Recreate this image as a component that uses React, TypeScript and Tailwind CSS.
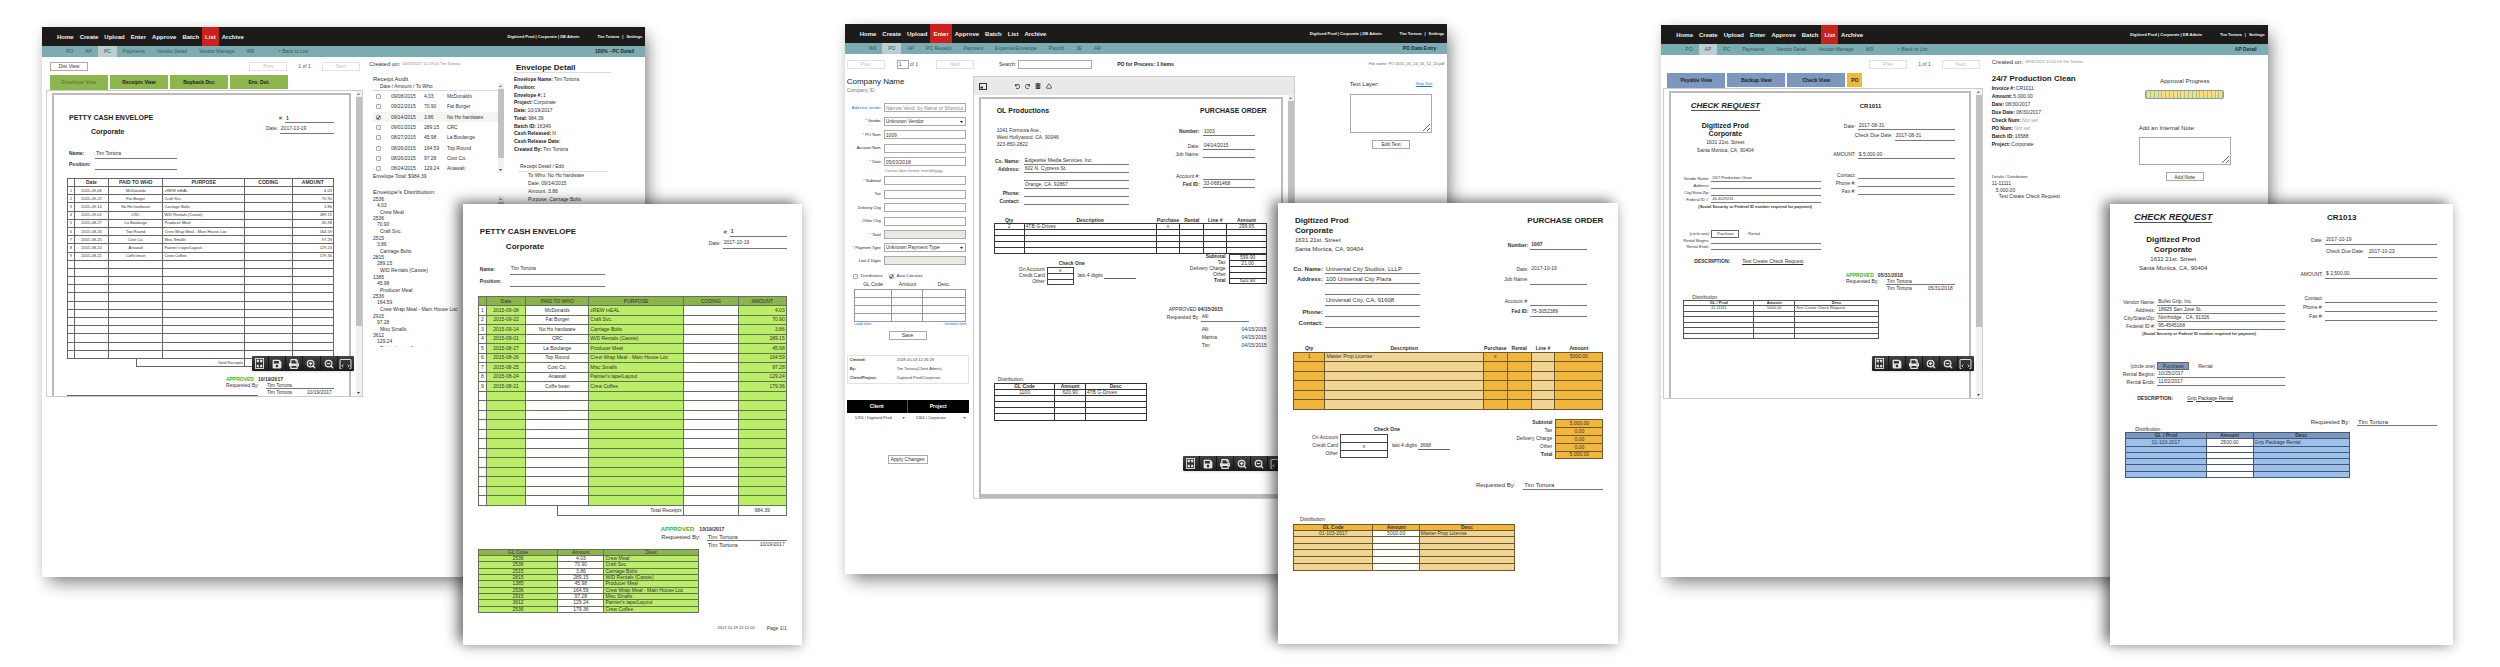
import { ReactNode } from "react";
import { FaSave, FaPrint, FaTrashAlt, FaUndo, FaRedo } from "react-icons/fa";
import { ZoomIn, ZoomOut, Triangle } from "lucide-react";

/* ---------- data ---------- */

const receipts = [
  { date: "2015-09-08", short: "09/08/2015", who: "McDonalds", purpose: "cREW mEAL", gl: "2536", desc: "Crew Meal", amount: "4.03" },
  { date: "2015-09-22", short: "09/22/2015", who: "Fat Burger", purpose: "Craft Svc.", gl: "2536", desc: "Craft Svc.", amount: "70.90" },
  { date: "2015-09-14", short: "09/14/2015", who: "No Ho hardware", purpose: "Carriage Bolts", gl: "2515", desc: "Carriage Bolts", amount: "3.86" },
  { date: "2015-09-01", short: "09/01/2015", who: "CRC", purpose: "W/D Rentals (Cassie)", gl: "2815", desc: "W/D Rentals (Cassie)", amount: "289.15" },
  { date: "2015-08-27", short: "08/27/2015", who: "La Boulange", purpose: "Producer Meal", gl: "1385", desc: "Producer Meal", amount: "45.98" },
  { date: "2015-08-26", short: "08/26/2015", who: "Top Round", purpose: "Crew Wrap Meal - Main House Loc", gl: "2536", desc: "Crew Wrap Meal - Main House Loc", amount: "164.59" },
  { date: "2015-08-25", short: "08/26/2015", who: "Cost Co.", purpose: "Misc Smalls", gl: "2915", desc: "Misc Smalls", amount: "97.28" },
  { date: "2015-08-24", short: "08/24/2015", who: "Anawalt", purpose: "Painter's tape/Layout", gl: "3612", desc: "Painter's tape/Layout", amount: "129.24" },
  { date: "2015-08-21", short: "08/21/2015", who: "Coffe bean", purpose: "Crew Coffee", gl: "2536", desc: "Crew Coffee", amount: "179.36" },
];

const mainNav = ["Home", "Create", "Upload", "Enter", "Approve", "Batch", "List", "Archive"];
const listNav = ["PO", "AP", "PC", "Payments", "Vendor Detail", "Vendor Manage", "W9"];
const entryNav = ["W9", "PO", "AP", "PC Receipt", "Payment", "Expense/Envelope", "Payroll", "JE", "AR"];

const range = (n: number) => Array.from({ length: n }, (_, i) => i);

/* ---------- application chrome ---------- */

type WindowProps = {
  active: string;
  sub: string[];
  activeSub: string;
  back?: boolean;
  title: string;
  className: string;
  children: ReactNode;
};

function AppWindow({ active, sub, activeSub, back, title, className, children }: WindowProps) {
  return (
    <section
      className={`flex flex-col bg-white font-[family-name:'Liberation_Sans',Arial,sans-serif] text-[5px] leading-none text-[#333] shadow-[5px_8px_16px_-2px_rgba(0,0,0,0.45),0_0_10px_rgba(0,0,0,0.08)] ${className}`}
    >
      <header>
        <nav className="flex h-[19px] items-stretch bg-[#1c1b19] pl-[12px] pr-[3px] font-bold text-[#f2f2f2]">
          {mainNav.map((item) => (
            <a
              key={item}
              href="#"
              className={`flex items-center px-[3px] text-[6px] ${item === active ? "bg-[#cb2020]" : ""}`}
            >
              {item}
            </a>
          ))}
          <div className="ml-auto flex items-center text-[4px]">
            <span>Digitized Prod | Corporate | DB Admin</span>
            <a href="#" className="ml-[18px]">Tim Tortora</a>
            <span className="mx-[3px]">|</span>
            <a href="#">Settings</a>
          </div>
        </nav>
        <nav className="flex h-[11px] items-stretch bg-[#7aacb1] pl-[18px] pr-[11px] text-[#34585c]">
          {sub.map((item) => (
            <a
              key={item}
              href="#"
              className={`flex items-center whitespace-nowrap px-[6px] ${item === activeSub ? "bg-[#bccfd0]" : ""}`}
            >
              {item}
            </a>
          ))}
          {back && (
            <a href="#" className="ml-[12px] flex items-center px-[6px]">
              &lt; Back to List
            </a>
          )}
          <h2 className="ml-auto flex items-center font-bold text-[#1e2b2c]">{title}</h2>
        </nav>
      </header>
      {children}
    </section>
  );
}

function PlainButton({ children, className = "w-[38px]", faded = false }: { children: ReactNode; className?: string; faded?: boolean }) {
  return (
    <button
      className={`flex h-[9px] shrink-0 items-center justify-center whitespace-nowrap border bg-white ${faded ? "border-[#e2e2e2] text-[#c0c0c0]" : "border-[#aaa] text-[#333]"} ${className}`}
    >
      {children}
    </button>
  );
}

function CheckBox({ checked = false }: { checked?: boolean }) {
  return (
    <span className="relative flex size-[5px] shrink-0">
      <input type="checkbox" defaultChecked={checked} className="peer size-[5px] appearance-none rounded-[1px] border border-[#aaa] bg-[#f4f4f4]" />
      <svg viewBox="0 0 10 10" className="pointer-events-none absolute inset-0 hidden size-[5px] peer-checked:block" fill="none" stroke="#333" strokeWidth="2">
        <path d="m2 5 2 3 4-6" />
      </svg>
    </span>
  );
}

function ScrollBar({ thumb }: { thumb: string }) {
  return (
    <div className="flex w-[6px] shrink-0 flex-col items-center gap-[2px] bg-[#f1f1f1] py-[2px]">
      <svg viewBox="0 0 6 4" className="h-[2px] w-[3px] shrink-0" fill="#777"><path d="M0 4 3 0 6 4Z" /></svg>
      <div className={`w-full bg-[#c1c1c1] ${thumb}`} />
      <svg viewBox="0 0 6 4" className="mt-auto h-[2px] w-[3px] shrink-0" fill="#444"><path d="M0 0 3 4 6 0Z" /></svg>
    </div>
  );
}

function ViewerTools({ className }: { className: string }) {
  const cell = "flex flex-1 items-center justify-center border-l border-[#151515] first:border-l-0";
  return (
    <div className={`absolute flex h-[15px] w-[102px] rounded-[1px] bg-linear-to-b from-[#444] to-[#1b1b1b] text-[#e4e4e4] shadow-sm ${className}`}>
      <button aria-label="Fit page" className={cell}>
        <svg viewBox="0 0 20 24" className="h-[11px] w-[9px]" fill="none" stroke="currentColor" strokeWidth="2">
          <rect x="1" y="1" width="18" height="22" />
          <path d="M5 9V5h4M15 9V5h-4M5 15v4h4M15 15v4h-4M5 5l3 4M15 5l-3 4M5 19l3-4M15 19l-3-4" strokeWidth="2.4" />
        </svg>
      </button>
      <button aria-label="Save" className={cell}><FaSave className="size-[10px]" /></button>
      <button aria-label="Print" className={cell}><FaPrint className="size-[10px]" /></button>
      <button aria-label="Zoom in" className={cell}><ZoomIn className="size-[10px]" strokeWidth={3} /></button>
      <button aria-label="Zoom out" className={cell}><ZoomOut className="size-[10px]" strokeWidth={3} /></button>
      <button aria-label="Fit width" className={cell}>
        <svg viewBox="0 0 26 22" className="h-[10px] w-[13px]" fill="none" stroke="currentColor" strokeWidth="2.2">
          <path d="M1 21V3a2 2 0 0 1 2-2h20a2 2 0 0 1 2 2v18M1 21h3M25 21h-3" />
          <path d="m8 12-3 3 3 3M18 12l3 3-3 3" />
        </svg>
      </button>
    </div>
  );
}

function Viewer({ children, className, thumb, toolbar }: { children: ReactNode; className: string; thumb: string; toolbar?: ReactNode }) {
  return (
    <div className={`relative flex flex-col overflow-hidden border border-[#ccc] bg-white ${className}`}>
      {toolbar}
      <div className="flex min-h-0 flex-1">
        <div className="min-w-0 flex-1 pl-[5px] pr-[5px] pt-[2px]">{children}</div>
        <ScrollBar thumb={thumb} />
      </div>
    </div>
  );
}

function PageFrame({ children, className = "" }: { children: ReactNode; className?: string }) {
  return <div className={`border-2 border-[#bbb] bg-white ${className}`}>{children}</div>;
}

/* ---------- document building blocks ---------- */

const docFont = "font-[family-name:'Liberation_Sans',Arial,sans-serif] leading-none text-[#333]";

type FieldProps = {
  label?: string;
  value?: string;
  row: string;
  labelClass: string;
  bold?: boolean;
  valueBold?: boolean;
  plain?: boolean;
};

function Field({ label = "", value = "", row, labelClass, bold, valueBold, plain }: FieldProps) {
  return (
    <div className={`flex ${row}`}>
      <span className={`flex shrink-0 items-center justify-end whitespace-nowrap ${bold ? "font-bold" : ""} ${labelClass}`}>{label}</span>
      <span
        className={`flex min-w-0 flex-1 items-center whitespace-nowrap border-b pl-px ${plain ? "border-transparent" : "border-[#777]"} ${valueBold ? "font-bold" : ""}`}
      >
        {value}
      </span>
    </div>
  );
}

function Approval({ big, date }: { big: boolean; date: string }) {
  return (
    <div className={big ? "text-[6px]" : "text-[5px]"}>
      <div className={`flex items-center font-bold ${big ? "h-[8px] gap-[5px]" : "h-[6px] gap-[4px]"}`}>
        <span className="text-[#3db51c]">APPROVED</span>
        <span className="text-[5px]">{date}</span>
      </div>
      <Field label="Requested By:" value="Tim Tortora" row={big ? "h-[8px]" : "h-[7px]"} labelClass={big ? "w-[46px] pr-[6px]" : "w-[40px] pr-[7px]"} />
      <div className={`flex items-center justify-between pr-[2px] ${big ? "h-[7px] pl-[47px]" : "h-[6px] pl-[41px]"}`}>
        <span>Tim Tortora</span>
        <span className="text-[5px]">{date}</span>
      </div>
    </div>
  );
}

/* ---------- petty cash envelope ---------- */

function PettyCash({ big }: { big: boolean }) {
  const s = big
    ? {
        page: "px-[15px] pt-[23px] pb-[10px]", title: "text-[8px] leading-[9px] pl-[2px]", sub: "mt-[6px] pl-[28px] text-[8px] leading-[10px]",
        right: "w-[78px]", r1: "h-[10px] text-[5px] pl-[15px]", r2: "h-[12px] text-[5px]", names: "mt-[11px] w-[127px] pl-[2px] text-[5px]",
        name: "h-[12px]", nameLabel: "w-[30px] justify-start!", table: "mt-[9px] h-[210px] text-[5px]", head: "bg-[#8ab44e]", cell: "bg-[#b9ee66]",
        border: "border-[#66705a]", row: "h-[9px]", total: "h-[10px] text-[5px]", approve: "mt-[9px] w-[126px]", gl: "mt-px h-[64px] text-[5px]",
      }
    : {
        page: "pl-[13px] pr-[15px] pt-[19px]", title: "text-[7px] leading-[8px] pl-[2px]", sub: "mt-[5px] pl-[24px] text-[7px] leading-[9px]",
        right: "w-[68px]", r1: "h-[9px] text-[5px] pl-[13px]", r2: "h-[11px] text-[5px]", names: "mt-[12px] w-[110px] pl-[2px] text-[5px]",
        name: "h-[11px]", nameLabel: "w-[26px] justify-start!", table: "mt-[8px] h-[181px] text-[4px]", head: "", cell: "",
        border: "border-[#666]", row: "h-[8px]", total: "h-[8px] text-[4px]", approve: "mt-[9px] w-[108px]", gl: "text-[4px]",
      };
  const td = `border px-px ${s.border}`;
  return (
    <div className={`${docFont} ${s.page}`}>
      <div className="flex justify-between">
        <div className="font-bold text-[#222]">
          <h3 className={`whitespace-nowrap ${s.title}`}>PETTY CASH ENVELOPE</h3>
          <p className={s.sub}>Corporate</p>
        </div>
        <div className={s.right}>
          <Field label="#:" value="1" row={s.r1} labelClass="pr-[2px]" valueBold />
          <Field label="Date:" value="2017-10-19" row={s.r2} labelClass="pr-[2px]" />
        </div>
      </div>
      <div className={s.names}>
        <Field label="Name:" value="Tim Tortora" row={s.name} labelClass={s.nameLabel} bold />
        <Field label="Position:" row={s.name} labelClass={s.nameLabel} bold />
      </div>
      <table className={`w-full table-fixed border-collapse ${s.table}`}>
        <colgroup>
          <col className="w-[2.6%]" /><col className="w-[12.8%]" /><col className="w-[20.5%]" />
          <col className="w-[30.7%]" /><col className="w-[17.9%]" /><col className="w-[15.5%]" />
        </colgroup>
        <thead className={`text-[5px] ${s.head}`}>
          <tr className={s.row}>
            {["", "Date", "PAID TO WHO", "PURPOSE", "CODING", "AMOUNT"].map((h) => (
              <th key={h} className={`${td} ${big ? "font-normal" : "font-bold"}`}>{h}</th>
            ))}
          </tr>
        </thead>
        <tbody>
          {range(21).map((i) => {
            const r = receipts[i];
            return (
              <tr key={i} className={`whitespace-nowrap text-center ${s.row}`}>
                <td className={`border ${s.border}`}>{r ? i + 1 : ""}</td>
                <td className={`${td} ${s.cell}`}>{r?.date}</td>
                <td className={td}>{r?.who}</td>
                <td className={`${td} ${s.cell} text-left`}>{r?.purpose}</td>
                <td className={td} />
                <td className={`${td} ${s.cell} text-right`}>{r?.amount}</td>
              </tr>
            );
          })}
        </tbody>
      </table>
      <div className={`ml-auto flex w-[74.3%] border border-t-0 ${s.border} ${s.total}`}>
        <span className={`flex w-[55.2%] items-center justify-end border-r pr-px ${s.border}`}>Total Receipts</span>
        <span className={`w-[24.1%] border-r ${s.border}`} />
        <span className="flex flex-1 items-center justify-center">{big ? "984.39" : ""}</span>
      </div>
      <div className={`ml-auto ${s.approve}`}>
        <Approval big={big} date="10/19/2017" />
      </div>
      <table className={`w-[71.7%] table-fixed border-collapse ${s.gl}`}>
        <colgroup><col className="w-[36%]" /><col className="w-[21%]" /><col /></colgroup>
        <thead className={s.head}>
          <tr className="h-[6px]">{["GL Code", "Amount", "Desc"].map((h) => <th key={h} className={`${td} font-normal`}>{h}</th>)}</tr>
        </thead>
        {big && (
          <tbody>
            {receipts.map((r, i) => (
              <tr key={i} className="h-[6px] whitespace-nowrap text-center">
                <td className={`${td} ${s.cell}`}>{r.gl}</td>
                <td className={td}>{r.amount}</td>
                <td className={`${td} ${s.cell} text-left`}>{r.desc}</td>
              </tr>
            ))}
          </tbody>
        )}
      </table>
      {big && (
        <footer className="mt-[10px] flex h-[10px] items-center justify-end gap-[12px]">
          <span className="text-[4px]">2017-10-19 22:12:00</span>
          <span className="text-[5px]">Page 1/1</span>
        </footer>
      )}
    </div>
  );
}

/* ---------- purchase order ---------- */

function PurchaseOrder({ big }: { big: boolean }) {
  const s = big
    ? {
        page: "px-[15px] pt-[13px] text-[5px]", left: "w-[127px]", title: "text-[8px] leading-[10px] pl-[2px]", addr: "text-[6px] leading-[9px] pl-[2px]",
        co: "mt-[10px]", row: "h-[11px] text-[6px]", first: "h-[10px] text-[6px]", label: "w-[32px] pr-[2px]", right: "w-[91px] mr-[16px]", rlabel: "w-[34px] pr-[2px]",
        num: "mt-[14px] h-[10px]", date: "mt-[14px] h-[10px]", job: "h-[11px]", acct: "mt-[11px] h-[10px]", fed: "h-[11px]",
        sums: "mt-[9px]", sumRow: "h-[8px]", checks: "mt-[7px] pl-[19px]", checkHead: "h-[8px] w-[58px]",
        checkLabel: "w-[28px]", box: "w-[48px]", req: "mt-[22px] w-[127px]", dist: "mt-[26px] h-[8px] pl-[7px]", gl: "h-[47px] w-[71.5%]",
        dark: "bg-[#f3b63c]", light: "bg-[#f2d595]", border: "border-[#6b5a2c]", amt: "w-[48px]",
      }
    : {
        page: "pl-[13px] pr-[14px] pt-[8px] text-[5px]", left: "w-[135px]", title: "text-[7px] leading-[8px] pl-[3px]", addr: "mt-[12px] leading-[7px] pl-[3px]",
        co: "mt-[9px]", row: "h-[8px]", first: "h-[8px]", label: "w-[30px] pr-[4px]", right: "w-[90px] mr-[12px]", rlabel: "w-[38px] pr-[3px]",
        num: "mt-[12px] h-[9px]", date: "mt-[6px] h-[8px]", job: "h-[8px]", acct: "mt-[14px] h-[8px]", fed: "h-[8px]",
        sums: "", sumRow: "h-[6px]", checks: "mt-[7px] pl-[23px]", checkHead: "h-[6px] w-[60px]",
        checkLabel: "w-[30px]", box: "w-[27px]", req: "mt-[20px] w-[101px]", dist: "mt-[27px] h-[6px] pl-[4px]", gl: "h-[38px] w-[56%]",
        dark: "", light: "", border: "border-[#333]", amt: "w-[38px]",
      };
  const co = big
    ? ["Universal City Studios, LLLP", "100 Universal City Plaza", "", "Universal City, CA, 91608", "", ""]
    : ["Edgewise Media Services, Inc.", "602 N. Cypress St.", "", "Orange, CA, 92867", "", ""];
  const coLabels = ["Co. Name:", "Address:", "", "", "Phone:", "Contact:"];
  const sums = big
    ? ["5,000.00", "0.00", "0.00", "0.00", "5,000.00"]
    : ["599.90", "21.00", "", "", "620.90"];
  const td = `border ${s.border}`;
  return (
    <div className={`${docFont} ${s.page}`}>
      <div className="flex justify-between">
        <div className={s.left}>
          <h3 className={`font-bold text-[#222] ${s.title}`}>{big ? <>Digitized Prod<br />Corporate</> : "OL Productions"}</h3>
          <p className={`whitespace-nowrap ${s.addr}`}>
            {big ? <>1631 21st. Street<br />Santa Monica, CA, 90404</> : <>1041 Formosa Ave.,<br />West Hollywood, CA, 90046<br />323-850-2822</>}
          </p>
          <div className={s.co}>
            {co.map((v, i) => (
              <Field key={i} label={coLabels[i]} value={v} row={i < 2 ? s.first : s.row} labelClass={s.label} bold />
            ))}
          </div>
        </div>
        <div>
          <h3 className={`whitespace-nowrap text-right font-bold text-[#222] ${s.title}`}>PURCHASE ORDER</h3>
          <div className={`ml-auto ${s.right}`}>
            <Field label="Number:" value={big ? "1007" : "1003"} row={s.num} labelClass={s.rlabel} bold valueBold={big} />
            <Field label="Date:" value={big ? "2017-10-19" : "04/14/2015"} row={s.date} labelClass={s.rlabel} plain={big} />
            <Field label="Job Name:" row={s.job} labelClass={s.rlabel} />
            <Field label="Account #:" row={s.acct} labelClass={s.rlabel} />
            <Field label="Fed ID:" value={big ? "75-3052389" : "33-0681468"} row={s.fed} labelClass={s.rlabel} bold />
          </div>
        </div>
      </div>
      <table className="w-full table-fixed border-collapse">
        <colgroup>
          <col className={big ? "w-[10.2%]" : "w-[11%]"} /><col />
          <col className={big ? "w-[7.7%]" : "w-[8.7%]"} /><col className={big ? "w-[7.7%]" : "w-[8.7%]"} />
          <col className={big ? "w-[7.7%]" : "w-[8.6%]"} /><col className={big ? "w-[15.5%]" : "w-[14.4%]"} />
        </colgroup>
        <thead>
          <tr>
            {["Qty", "Description", "Purchase", "Rental", "Line #", "Amount"].map((h) => (
              <th key={h} className={big ? "h-[24px] align-bottom leading-[7px]" : "h-[18px] align-bottom leading-[6px]"}>{h}</th>
            ))}
          </tr>
        </thead>
        <tbody>
          {range(big ? 6 : 5).map((i) => (
            <tr key={i} className={big ? (i % 2 === 0 ? "h-[9px]" : "h-[10px]") : "h-[6px]"}>
              <td className={`${td} ${s.dark} text-center`}>{i === 0 ? (big ? "1" : "2") : ""}</td>
              <td className={`${td} ${s.light} pl-px`}>{i === 0 ? (big ? "Master Prop License" : "4TB G-Drives") : ""}</td>
              <td className={`${td} ${s.dark} text-center`}>{i === 0 ? "x" : ""}</td>
              <td className={`${td} ${s.dark}`} />
              <td className={`${td} ${s.light}`} />
              <td className={`${td} ${s.dark} text-center`}>{i === 0 ? (big ? "5000.00" : "299.95") : ""}</td>
            </tr>
          ))}
        </tbody>
      </table>
      <div className={`flex justify-between ${s.sums}`}>
        <div className={s.checks}>
          <p className={`ml-auto mr-[34px] flex items-center justify-center font-bold ${s.checkHead}`}>Check One</p>
          {["On Account", "Credit Card", "Other"].map((label, i) => (
            <div key={label} className={`flex ${s.sumRow}`}>
              <span className={`flex items-center justify-end whitespace-nowrap pr-[2px] ${s.checkLabel}`}>{label}</span>
              <span className={`flex items-center justify-center border border-b-0 border-[#444] ${s.box} ${i === 2 ? "border-b!" : ""}`}>
                {(big ? i === 1 : i === 0) ? "x" : ""}
              </span>
              {i === 1 && (
                <span className="flex items-center whitespace-nowrap pl-[4px]">
                  last 4 digits
                  <span className="ml-px flex h-full w-[32px] items-center border-b border-[#666] pl-[2px]">{big ? "3668" : ""}</span>
                </span>
              )}
            </div>
          ))}
        </div>
        <div>
          {["Subtotal", "Tax", "Delivery Charge", "Other", "Total"].map((label, i) => (
            <div key={label} className={`flex justify-end ${s.sumRow}`}>
              <span className={`flex items-center pr-[3px] ${i === 0 || i === 4 ? "font-bold" : ""}`}>{label}</span>
              <span className={`flex items-center justify-center border border-b-0 ${s.border} ${s.dark} ${s.amt} ${i === 4 ? "border-b!" : ""}`}>{sums[i]}</span>
            </div>
          ))}
        </div>
      </div>
      <div className={`ml-auto ${s.req}`}>
        {big ? (
          <Field label="Requested By:" value="Tim Tortora" row="h-[9px] text-[6px]" labelClass="w-[47px] pr-[8px]" />
        ) : (
          <>
            <p className="h-[8px] whitespace-nowrap pl-[3px] leading-[8px]">APPROVED <b>04/15/2015</b></p>
            <div className="mr-[18px]"><Field label="Requested By:" value="Alli" row="h-[9px]" labelClass="w-[35px] pr-px" /></div>
            <div className="mt-[4px]">
              {["Alli", "Marina", "Tim"].map((n) => (
                <p key={n} className="flex h-[8px] items-center justify-between pl-[36px]"><span>{n}</span><span>04/15/2015</span></p>
              ))}
            </div>
          </>
        )}
      </div>
      <p className={`flex items-center ${s.dist}`}>{big ? "Distribution" : "Distribution:"}</p>
      <table className={`table-fixed border-collapse ${s.gl}`}>
        <colgroup><col className={big ? "w-[36%]" : "w-[40%]"} /><col className={big ? "w-[21%]" : "w-[20%]"} /><col /></colgroup>
        <thead className={s.dark}>
          <tr className="h-[6px]">{["GL Code", "Amount", "Desc"].map((h) => <th key={h} className={td}>{h}</th>)}</tr>
        </thead>
        <tbody>
          {range(big ? 6 : 5).map((i) => (
            <tr key={i} className="h-[6px] text-center">
              <td className={`${td} ${s.light}`}>{i === 0 ? (big ? "01-103-2017" : "1100") : ""}</td>
              <td className={td}>{i === 0 ? (big ? "5000.00" : "620.90") : ""}</td>
              <td className={`${td} ${s.light} pl-px text-left`}>{i === 0 ? (big ? "Master Prop License" : "4TB G-Drives") : ""}</td>
            </tr>
          ))}
        </tbody>
      </table>
    </div>
  );
}

/* ---------- check request ---------- */

function CheckRequest({ big }: { big: boolean }) {
  const s = big
    ? {
        page: "pl-[15px] pr-[16px] pt-[8px] text-[5px]", left: "w-[160px]", right: "w-[138px]", center: "w-[96px]", title: "h-[11px] text-[9px] leading-[11px]",
        num: "h-[11px] pl-[28px] text-[8px] leading-[12px]", co: "mt-[12px] text-[8px] leading-[10px]", addr: "text-[6px] leading-[9px]", vendor: "mt-[25px]", row: "h-[8px]",
        label: "w-[32px] pr-[2px]", note: "h-[8px] text-[4px] leading-[8px] pl-[17px]", circle: "mt-[24px] h-[8px]", box: "w-[32px] bg-[#7c98bf]", rent: "h-[8px]",
        desc: "mt-[8px] h-[8px] pl-[12px] gap-[14px]", rlabel: "w-[26px] pr-[2px]", date: "mt-[12px] h-[10px]", due: "h-[13px]", dueLabel: "w-[45px] pr-[4px]",
        amount: "mt-[11px] h-[10px]", contact: "mt-[14px] h-[10px]", phone: "h-[9px]", approve: "mt-[16px] w-[126px] h-[8px]",
        dist: "h-[6px] pl-[10px]", gl: "h-[46px] w-[72%]", head: "bg-[#7c98bf]", cell: "bg-[#9cc0ec]", border: "border-[#47586e]",
      }
    : {
        page: "pl-[12px] pr-[14px] pt-[8px] text-[4px]", left: "w-[138px]", right: "w-[119px]", center: "w-[84px]", title: "h-[10px] text-[8px] leading-[10px]",
        num: "h-[10px] pl-[24px] text-[6px] leading-[11px]", co: "mt-[11px] text-[7px] leading-[8px]", addr: "text-[5px] leading-[8px]", vendor: "mt-[21px]", row: "h-[7px]",
        label: "w-[28px] pr-[2px]", note: "h-[7px] text-[4px] leading-[7px] pl-[15px]", circle: "mt-[20px] h-[8px]", box: "w-[28px]", rent: "h-[6px]",
        desc: "mt-[8px] h-[7px] pl-[11px] gap-[12px]", rlabel: "w-[22px] pr-[2px]", date: "mt-[11px] h-[8px]", due: "h-[11px]", dueLabel: "w-[39px] pr-[2px]",
        amount: "mt-[9px] h-[9px]", contact: "mt-[12px] h-[8px]", phone: "h-[8px]", approve: "mt-[7px] w-[109px]",
        dist: "mt-[3px] h-[6px] pl-[9px] text-[5px]", gl: "h-[39px] w-[72%]", head: "", cell: "", border: "border-[#555]",
      };
  const vendor = big ? ["Bullet Grip, Inc.", "18925 San Jose St.", "Northridge , CA, 91326", "95-4545168"] : ["24/7 Production Clean", "", "", "46-4029231"];
  const td = `border ${s.border}`;
  return (
    <div className={`${docFont} ${s.page}`}>
      <div className="flex justify-between">
        <div className={s.left}>
          <div className={`text-center ${s.center}`}>
            <h3 className={`inline-block whitespace-nowrap border-b border-[#555] font-bold italic text-[#222] ${s.title}`}>CHECK REQUEST</h3>
            <p className={`font-bold text-[#222] ${s.co}`}>Digitized Prod<br />Corporate</p>
            <p className={`whitespace-nowrap ${s.addr}`}>1631 21st. Street<br />Santa Monica, CA, 90404</p>
          </div>
          <div className={s.vendor}>
            {["Vendor Name:", "Address:", "City/State/Zip:", "Federal ID #:"].map((l, i) => (
              <Field key={l} label={l} value={vendor[i]} row={s.row} labelClass={s.label} />
            ))}
          </div>
          <p className={`whitespace-nowrap font-bold ${s.note}`}>(Social Security or Federal ID number required for payment)</p>
          <div className={`flex ${s.circle}`}>
            <span className={`flex items-center justify-end whitespace-nowrap ${s.label}`}>(circle one)</span>
            <span className={`flex items-center justify-center border border-[#666] ${s.box}`}>Purchase</span>
            <span className="flex items-center pl-[9px]">Rental</span>
          </div>
          <Field label="Rental Begins:" value={big ? "10/25/2017" : ""} row={s.rent} labelClass={s.label} />
          <Field label="Rental Ends:" value={big ? "11/02/2017" : ""} row={s.rent} labelClass={s.label} />
          <p className={`flex items-center whitespace-nowrap text-[5px] ${s.desc}`}>
            <b>DESCRIPTION:</b>
            <u>{big ? "Grip Package Rental" : "Test Create Check Request"}</u>
          </p>
        </div>
        <div className={`text-[5px] ${s.right}`}>
          <h3 className={`font-bold text-[#222] ${s.num}`}>{big ? "CR1013" : "CR1011"}</h3>
          <Field label="Date:" value={big ? "2017-10-19" : "2017-08-31"} row={s.date} labelClass={s.rlabel} />
          <div className={big ? "pl-[24px]" : "pl-[20px]"}>
            <Field label="Check Due Date:" value={big ? "2017-10-23" : "2017-08-31"} row={s.due} labelClass={s.dueLabel} />
          </div>
          <Field label="AMOUNT:" value={big ? "$ 2,500.00" : "$ 5,000.00"} row={s.amount} labelClass={s.rlabel} />
          <Field label="Contact:" row={s.contact} labelClass={s.rlabel} />
          <Field label="Phone #:" row={s.phone} labelClass={s.rlabel} />
          <Field label="Fax #:" row={s.phone} labelClass={s.rlabel} />
        </div>
      </div>
      <div className={`ml-auto ${s.approve}`}>
        {big ? (
          <Field label="Requested By:" value="Tim Tortora" row="h-[8px] text-[6px]" labelClass="w-[46px] pr-[7px]" />
        ) : (
          <Approval big={false} date="05/31/2018" />
        )}
      </div>
      <p className={`flex items-center ${s.dist}`}>Distribution</p>
      <table className={`table-fixed border-collapse ${s.gl}`}>
        <colgroup><col className="w-[36%]" /><col className="w-[21%]" /><col /></colgroup>
        <thead className={s.head}>
          <tr className="h-[5px]">{["GL / Prod", "Amount", "Desc"].map((h) => <th key={h} className={td}>{h}</th>)}</tr>
        </thead>
        <tbody>
          {range(6).map((i) => (
            <tr key={i} className="h-[5px] text-center">
              <td className={`${td} ${s.cell}`}>{i === 0 ? (big ? "01-103-2017" : "11-11111") : ""}</td>
              <td className={td}>{i === 0 ? (big ? "2500.00" : "5000.00") : ""}</td>
              <td className={`${td} ${s.cell} pl-px text-left`}>{i === 0 ? (big ? "Grip Package Rental" : "Test Create Check Request") : ""}</td>
            </tr>
          ))}
        </tbody>
      </table>
    </div>
  );
}

/* ---------- window bodies ---------- */

function Pager({ children }: { children?: ReactNode }) {
  return (
    <div className="mt-[5px] flex h-[9px] items-center pl-[8px] pr-[3px]">
      {children}
      <div className="ml-auto flex items-center gap-[11px]">
        <PlainButton faded>Prev</PlainButton>
        <span className="text-[#555]">1 of 1</span>
        <PlainButton faded>Next</PlainButton>
      </div>
    </div>
  );
}

function Tab({ children, className }: { children: ReactNode; className: string }) {
  return <button className={`flex items-center justify-center whitespace-nowrap font-bold ${className}`}>{children}</button>;
}

function CreatedOn({ children }: { children: ReactNode }) {
  return (
    <p className="flex items-center gap-[2px] whitespace-nowrap text-[6px] leading-[8px]">
      Created on: <span className="text-[4px] text-[#888]">{children}</span>
    </p>
  );
}

function Facts({ items, className }: { items: [string, string][]; className: string }) {
  return (
    <dl className={`flex flex-col justify-between leading-[7px] ${className}`}>
      {items.map(([k, v]) => (
        <div key={k} className="flex gap-px whitespace-nowrap">
          <dt className="font-bold text-[#222]">{k}:</dt>
          <dd className={v === "Not set" ? "italic text-[#999]" : ""}>{v}</dd>
        </div>
      ))}
    </dl>
  );
}

function PettyCashBody() {
  return (
    <div className="flex">
      <div className="w-[53.2%]">
        <Pager><PlainButton>Dist View</PlainButton></Pager>
        <div className="mt-[4px] flex h-[15px] items-start gap-[2px] pl-[8px]">
          <Tab className="h-[15px] w-[58px] bg-[#8cb74e] text-[#64813a]">Envelope View</Tab>
          <Tab className="h-[14px] w-[58px] bg-[#8cb74e] text-[#222]">Receipts View</Tab>
          <Tab className="h-[14px] w-[58px] bg-[#8cb74e] text-[#222]">Buyback Doc</Tab>
          <Tab className="h-[14px] w-[58px] bg-[#8cb74e] text-[#222]">Env. Det.</Tab>
        </div>
        <div className="relative">
          <Viewer className="ml-[4px] h-[307px]" thumb="h-[229px]">
            <PageFrame className="border-b-0!"><PettyCash big={false} /></PageFrame>
          </Viewer>
          <ViewerTools className="bottom-[26px] right-[9px]" />
        </div>
      </div>
      <div className="ml-[6px] w-[22.4%] pt-[3px]">
        <CreatedOn>10/19/2017 15:19:20 Tim Tortora</CreatedOn>
        <div className="pl-[4px]">
          <h3 className="mt-[7px] text-[6px] leading-[8px]">Receipt Audit</h3>
          <div className="flex h-[90px]">
            <div className="flex-1">
              <p className="h-[8px] border-b border-[#ddd] pl-[7px] leading-[7px]">Date / Amount / To Who</p>
              {receipts.slice(0, 8).map((r, i) => (
                <label key={r.date} className={`flex items-center pl-[3px] ${i === 2 ? "bg-[#f4f4f3]" : ""} ${i % 3 === 1 ? "h-[11px]" : "h-[10px]"}`}>
                  <CheckBox checked={i === 2} />
                  <span className="ml-[10px] w-[33px] shrink-0">{r.short}</span>
                  <span className="w-[23px] shrink-0">{r.amount}</span>
                  <span className="whitespace-nowrap">{r.who}</span>
                </label>
              ))}
            </div>
            <ScrollBar thumb="h-[69px]" />
          </div>
          <p className="leading-[6px]">Envelope Total: $984.39</p>
          <h3 className="mt-[9px] text-[6px] leading-[8px]">Envelope's Distribution:</h3>
          <div className="flex h-[151px] overflow-hidden">
            <div className="flex-1 whitespace-nowrap leading-[6px]">
              {receipts.slice(0, 8).map((r, i) => (
                <div key={i} className="h-[19px] even:h-[20px]">
                  <p>{r.gl}</p>
                  <p className="pl-[4px] leading-[7px]">{r.amount}</p>
                  <p className="pl-[7px]">{r.desc}</p>
                </div>
              ))}
            </div>
            <ScrollBar thumb="h-[60px]" />
          </div>
        </div>
      </div>
      <div className="ml-[10px] flex-1 pt-[6px]">
        <h3 className="mr-[34px] h-[10px] border-b border-[#ddd] pl-[2px] text-[8px] font-bold leading-[10px] text-[#222]">Envelope Detail</h3>
        <Facts
          className="mt-[3px] h-[77px]"
          items={[
            ["Envelope Name", "Tim Tortora"], ["Position", ""], ["Envelope #", "1"], ["Project", "Corporate"], ["Date", "10/19/2017"],
            ["Total", "984.39"], ["Batch ID", "16349"], ["Cash Released", "N"], ["Cash Release Date", ""], ["Created By", "Tim Tortora"],
          ]}
        />
        <div className="ml-[4px] mr-[38px] mt-[9px]">
          <h4 className="border-b border-[#ddd] pl-[2px] leading-[9px]">Receipt Detail / Edit</h4>
          <div className="flex h-[31px] flex-col justify-between whitespace-nowrap pl-[10px] leading-[7px]">
            <p>To Who: No Ho hardware</p>
            <p>Date: 09/14/2015</p>
            <p>Amount: 3.86</p>
            <p>Purpose: Carriage Bolts</p>
          </div>
        </div>
      </div>
    </div>
  );
}

type FormRowProps = { id: string; label: string; required?: boolean; value?: string; placeholder?: string; options?: string; disabled?: boolean; link?: boolean };

function FormRow({ id, label, required, value, placeholder, options, disabled, link }: FormRowProps) {
  const box = `h-[9px] w-[82px] shrink-0 border border-[#aaa] px-px text-[5px] leading-[7px] placeholder:text-[#888] ${disabled ? "bg-[#e9e9e1]" : "bg-white"}`;
  return (
    <div className="flex h-[9px] items-center justify-end gap-[3px]">
      <label htmlFor={id} className={`whitespace-nowrap text-[4px] ${link ? "text-[#2b6fd0]" : "text-[#222]"}`}>
        {required && <span className="text-[#d33]">* </span>}{label}
      </label>
      {options ? (
        <div className="relative flex">
          <select id={id} className={`appearance-none ${box}`}><option>{options}</option></select>
          <svg viewBox="0 0 6 4" className="pointer-events-none absolute right-[3px] top-[4px] h-[2px] w-[3px]" fill="#222"><path d="M0 0 3 4 6 0Z" /></svg>
        </div>
      ) : (
        <input id={id} className={box} defaultValue={value} placeholder={placeholder} disabled={disabled} />
      )}
    </div>
  );
}

function EntryForm() {
  return (
    <div className="w-[122px] shrink-0">
      <h2 className="mt-[8px] text-[8px] leading-[9px] text-[#222]">Company Name</h2>
      <p className="leading-[8px] text-[#777]">Company ID:</p>
      <form className="mr-[3px] mt-[9px]">
        <div className="flex h-[136px] flex-col justify-between">
          <div className="flex h-[63px] flex-col justify-between">
            <FormRow id="narrow" label="Add new vendor" link placeholder="Narrow Vend. by Name or Shortcut" />
            <FormRow id="vendor" label="Vendor" required options="Unknown Vendor" />
            <FormRow id="ponum" label="PO Num" required value="1009" />
            <FormRow id="acct" label="Account Num" />
            <FormRow id="date" label="Date" required value="05/03/2018" />
          </div>
          <p className="h-[6px] pl-[38px] text-[4px] leading-[6px] text-[#777]">Correct date format: mm/dd/yyyy</p>
          <div className="flex h-[63px] flex-col justify-between">
            <FormRow id="subtotal" label="Subtotal" required />
            <FormRow id="tax" label="Tax" />
            <FormRow id="delivery" label="Delivery Chg" />
            <FormRow id="other" label="Other Chg" />
            <FormRow id="total" label="Total" required disabled />
          </div>
        </div>
        <div className="mt-[4px] flex flex-col gap-[4px]">
          <FormRow id="ptype" label="Payment Type" required options="Unknown Payment Type" />
          <FormRow id="last4" label="Last 4 Digits" disabled />
        </div>
      </form>
      <div className="mt-[7px] flex items-center pl-[6px] text-[4px] leading-[8px]">
        <label className="flex items-center gap-[3px]"><CheckBox />Distributions</label>
        <label className="ml-[6px] flex items-center gap-[3px]"><CheckBox checked />Auto Calculate</label>
      </div>
      <table className="ml-[7px] mt-px w-[112px] table-fixed border-collapse">
        <colgroup><col className="w-[34%]" /><col className="w-[28%]" /><col /></colgroup>
        <thead><tr>{["GL Code", "Amount", "Desc."].map((h) => <th key={h} className="h-[8px] font-normal">{h}</th>)}</tr></thead>
        <tbody>
          {range(4).map((i) => (
            <tr key={i} className="h-[8px]">{range(3).map((j) => <td key={j} className="border border-[#999]" />)}</tr>
          ))}
        </tbody>
      </table>
      <div className="ml-[7px] mr-[2px] flex justify-between text-[4px] text-[#2b6fd0]"><a href="#">+add item</a><a href="#">-remove item</a></div>
      <PlainButton className="mx-auto mt-[5px] w-[38px]">Save</PlainButton>
      <dl className="mt-[15px] border border-[#e2e2e2] px-[2px] text-[4px] text-[#444]">
        {[["Created:", "2018-05-03 12:26:28"], ["By:", "Tim Tortora(Client Admin)"], ["Client/Project:", "Digitized Prod/Corporate"]].map(([k, v]) => (
          <div key={k} className="flex h-[9px] items-center"><dt className="w-[47px] font-bold">{k}</dt><dd className="whitespace-nowrap">{v}</dd></div>
        ))}
      </dl>
      <div className="mt-[16px] grid grid-cols-2">
        <span className="flex h-[13px] items-center justify-center border-r border-[#555] bg-black font-bold text-white">Client</span>
        <span className="flex h-[13px] items-center justify-center bg-black font-bold text-white">Project</span>
        {["1294 / Digitized Prod", "1264 / Corporate"].map((o) => (
          <div key={o} className="relative flex h-[11px] items-center">
            <select aria-label={o} className="w-full appearance-none pl-[8px] text-[4px] leading-[8px]"><option>{o}</option></select>
            <svg viewBox="0 0 6 4" className="pointer-events-none absolute right-[3px] top-[4px] h-[2px] w-[3px]" fill="#777"><path d="M0 0 3 4 6 0Z" /></svg>
          </div>
        ))}
      </div>
      <PlainButton className="mx-auto mt-[31px] w-[40px]">Apply Changes</PlainButton>
    </div>
  );
}

function DataEntryBody() {
  return (
    <div className="pl-[2px]">
      <div className="mt-[5px] flex h-[10px] items-center">
        <PlainButton faded>Prev</PlainButton>
        <input aria-label="Page" defaultValue="1" className="ml-[12px] h-[9px] w-[12px] border border-[#aaa] px-px leading-[7px]" />
        <span className="ml-px text-[#555]">of 1</span>
        <PlainButton faded className="ml-[18px] w-[38px]">Next</PlainButton>
        <label htmlFor="search" className="ml-[25px]">Search:</label>
        <input id="search" className="ml-[2px] h-[9px] w-[74px] border border-[#aaa]" />
        <b className="ml-[25px] text-[#222]">PO for Process: 1 Items</b>
        <span className="ml-auto mr-[3px] text-[4px] text-[#666]">File name: PO 2015_05_24_16_12_24.pdf</span>
      </div>
      <div className="flex">
        <EntryForm />
        <div className="relative ml-[4px] mt-[7px] w-[53.6%]">
          <Viewer
            className="h-[423px]"
            thumb="h-[360px]"
            toolbar={
              <div className="flex h-[18px] items-center bg-[#ebe8e8] pl-[5px] text-[#333]">
                <button aria-label="Layout">
                  <svg viewBox="0 0 16 14" className="h-[7px] w-[8px]" fill="none" stroke="#333" strokeWidth="2"><rect x="1" y="1" width="14" height="12" /><rect x="3" y="7" width="5" height="4" fill="#333" stroke="none" /></svg>
                </button>
                <div className="ml-[28px] flex items-center gap-[5px]">
                  <button aria-label="Rotate left"><FaUndo className="size-[5px]" /></button>
                  <button aria-label="Rotate right"><FaRedo className="size-[5px]" /></button>
                  <button aria-label="Delete"><FaTrashAlt className="size-[6px]" /></button>
                  <button aria-label="Warn"><Triangle className="size-[6px]" strokeWidth={3} /></button>
                </div>
              </div>
            }
          >
            <PageFrame className="h-[401px] border-b-4!"><PurchaseOrder big={false} /></PageFrame>
          </Viewer>
          <ViewerTools className="bottom-[28px] right-[10px]" />
        </div>
        <div className="mr-[15px] flex flex-1 flex-col pl-[55px] pt-[11px]">
          <div className="flex items-center justify-between text-[6px] leading-[8px]">
            <label htmlFor="layer">Text Layer:</label>
            <a href="#" className="text-[4px] text-[#2b6fd0] underline">Strip Text</a>
          </div>
          <textarea id="layer" className="mt-[6px] h-[39px] w-full border border-[#aaa]" />
          <PlainButton className="mx-auto mt-[7px] w-[38px]">Edit Text</PlainButton>
        </div>
      </div>
    </div>
  );
}

function PayableBody() {
  return (
    <div className="flex">
      <div className="w-[53%]">
        <Pager />
        <div className="mt-[4px] flex h-[15px] items-start gap-[2px] pl-[6px] text-[#222]">
          <Tab className="h-[15px] w-[58px] bg-[#7c98bf]">Payable View</Tab>
          <Tab className="h-[14px] w-[58px] bg-[#7c98bf]">Backup View</Tab>
          <Tab className="h-[14px] w-[58px] bg-[#7c98bf]">Check View</Tab>
          <Tab className="h-[14px] w-[15px] bg-[#f3b63c]">PO</Tab>
        </div>
        <div className="relative">
          <Viewer className="ml-[2px] h-[311px]" thumb="h-[232px]">
            <PageFrame className="h-[330px]"><CheckRequest big={false} /></PageFrame>
          </Viewer>
          <ViewerTools className="bottom-[28px] right-[9px]" />
        </div>
      </div>
      <div className="ml-[9px] w-[147px] pt-[3px]">
        <CreatedOn>08/31/2017 10:50:54 Tim Tortora</CreatedOn>
        <h3 className="mt-[8px] whitespace-nowrap text-[8px] font-bold leading-[10px] text-[#222]">24/7 Production Clean</h3>
        <Facts
          className="mt-px h-[63px]"
          items={[
            ["Invoice #", "CR1011"], ["Amount", "5,000.00"], ["Date", "08/30/2017"], ["Due Date", "08/30/2017"],
            ["Check Num", "Not set"], ["PO Num", "Not set"], ["Batch ID", "16588"], ["Project", "Corporate"],
          ]}
        />
        <p className="mt-[26px] text-[4px] leading-[6px]">Details / Distribution:</p>
        <p className="leading-[7px]">11-11111</p>
        <p className="pl-[4px] leading-[6px]">5,000.00</p>
        <p className="pl-[7px] leading-[7px]">Test Create Check Request</p>
      </div>
      <div className="flex w-[92px] flex-col items-center pt-[22px] text-[6px] leading-[8px]">
        <h3>Approval Progress</h3>
        <div className="mt-[5px] flex h-[9px] w-[79px] gap-px rounded-[2px] border border-[#7aa5a8] bg-[#a8bd92] px-px">
          {range(20).map((i) => <span key={i} className="flex-1 bg-[#f8dc7d]" />)}
        </div>
        <label htmlFor="note" className="mt-[25px] self-start">Add an Internal Note:</label>
        <textarea id="note" className="mt-[5px] h-[28px] w-full border border-[#aaa]" />
        <PlainButton className="mt-[7px] w-[38px] text-[5px]">Add Note</PlainButton>
      </div>
    </div>
  );
}

/* ---------- page ---------- */

function Sheet({ children, className }: { children: ReactNode; className: string }) {
  return (
    <article
      className={`absolute right-0 min-h-[441px] bg-white shadow-[-6px_-3px_12px_rgba(0,0,0,0.5),2px_4px_10px_rgba(0,0,0,0.15)] ${className}`}
    >
      {children}
    </article>
  );
}

export default function App() {
  return (
    <main className="grid min-h-screen grid-cols-[760fr_774fr_792fr] items-start gap-x-[43px] bg-white pl-[42px] pr-[47px] pt-[24px]">
      <div className="relative">
        <AppWindow active="List" sub={listNav} activeSub="PC" back title="100% - PC Detail" className="mt-[3px] min-h-[550px] w-[79.4%]">
          <PettyCashBody />
        </AppWindow>
        <Sheet className="top-[180px] w-[44.6%]"><PettyCash big /></Sheet>
      </div>
      <div className="relative">
        <AppWindow active="Enter" sub={entryNav} activeSub="PO" title="PO Data Entry" className="min-h-[550px] w-[77.9%]">
          <DataEntryBody />
        </AppWindow>
        <Sheet className="top-[179px] w-[44%]"><PurchaseOrder big /></Sheet>
      </div>
      <div className="relative">
        <AppWindow active="List" sub={listNav} activeSub="AP" back title="AP Detail" className="mt-px min-h-[552px] w-[76.6%]">
          <PayableBody />
        </AppWindow>
        <Sheet className="top-[180px] w-[43.3%]"><CheckRequest big /></Sheet>
      </div>
    </main>
  );
}
